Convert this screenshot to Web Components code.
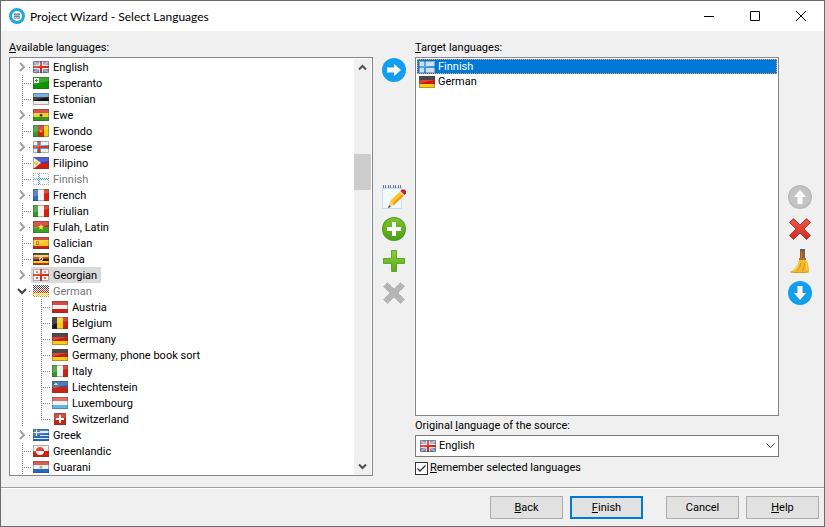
<!DOCTYPE html>
<html lang="en">
<head>
<meta charset="utf-8">
<meta name="viewport" content="width=device-width, initial-scale=1">
<title>Project Wizard - Select Languages</title>
<style>
  body {
    margin: 0;
    font-family: Roboto, "Liberation Sans", sans-serif;
    font-size: 11px;
    color: #000;
  }
</style>
</head>
<body>
<wizard-window>
  <span slot="title">Project Wizard - Select Languages</span>

  <language-tree slot="available">
    <span slot="label"><u>A</u>vailable languages:</span>
    <tree-item flag="gb" expandable>English</tree-item>
    <tree-item flag="eo">Esperanto</tree-item>
    <tree-item flag="ee">Estonian</tree-item>
    <tree-item flag="gh" expandable>Ewe</tree-item>
    <tree-item flag="cm">Ewondo</tree-item>
    <tree-item flag="fo" expandable>Faroese</tree-item>
    <tree-item flag="ph">Filipino</tree-item>
    <tree-item flag="fi" disabled>Finnish</tree-item>
    <tree-item flag="fr" expandable>French</tree-item>
    <tree-item flag="it">Friulian</tree-item>
    <tree-item flag="bf" expandable>Fulah, Latin</tree-item>
    <tree-item flag="es">Galician</tree-item>
    <tree-item flag="ug">Ganda</tree-item>
    <tree-item flag="ge" expandable selected>Georgian</tree-item>
    <tree-item flag="de" expandable expanded disabled>German
      <tree-item slot="children" flag="at">Austria</tree-item>
      <tree-item slot="children" flag="be">Belgium</tree-item>
      <tree-item slot="children" flag="de">Germany</tree-item>
      <tree-item slot="children" flag="de">Germany, phone book sort</tree-item>
      <tree-item slot="children" flag="it">Italy</tree-item>
      <tree-item slot="children" flag="li">Liechtenstein</tree-item>
      <tree-item slot="children" flag="lu">Luxembourg</tree-item>
      <tree-item slot="children" flag="ch" last>Switzerland</tree-item>
    </tree-item>
    <tree-item flag="gr" expandable>Greek</tree-item>
    <tree-item flag="gl">Greenlandic</tree-item>
    <tree-item flag="py">Guarani</tree-item>
  </language-tree>

  <tool-bar slot="tree-tools">
    <tool-button slot="first" icon="right" name="Add to target languages"></tool-button>
    <tool-button icon="edit" name="Edit language"></tool-button>
    <tool-button icon="add-round" name="Add language"></tool-button>
    <tool-button icon="add" name="Add sublanguage"></tool-button>
    <tool-button icon="remove" name="Remove language" disabled></tool-button>
  </tool-bar>

  <target-list slot="target">
    <span slot="label"><u>T</u>arget languages:</span>
    <target-item flag="fi" selected>Finnish</target-item>
    <target-item flag="de">German</target-item>
  </target-list>
  <source-select slot="target" flag="gb" value="English"></source-select>
  <check-option slot="target" checked><u>R</u>emember selected languages</check-option>

  <tool-bar slot="target-tools">
    <tool-button icon="up" name="Move up" disabled></tool-button>
    <tool-button icon="delete" name="Remove"></tool-button>
    <tool-button icon="clear" name="Remove all"></tool-button>
    <tool-button icon="down" name="Move down"></tool-button>
  </tool-bar>

  <dialog-button slot="steps"><u>B</u>ack</dialog-button>
  <dialog-button slot="steps" primary><u>F</u>inish</dialog-button>
  <dialog-button slot="actions">Cancel</dialog-button>
  <dialog-button slot="actions"><u>H</u>elp</dialog-button>
</wizard-window>

<script>
// Flag artwork on a 16x12 grid
const FLAGS = {
  gb: `<path fill="#4f96da" d="M0 0h16v12H0z"/><path stroke="#f0dcdc" stroke-width="1.400" d="M0 0l16 12M16 0L0 12"/><path stroke="#e06458" stroke-width=".7" d="M0 0l16 12M16 0L0 12"/><path fill="#f6dcd8" d="M6 0h4v12H6zM0 4h16v4H0z"/><path fill="#d42a20" d="M7 0h2v12H7zM0 5h16v2H0z"/>`,
  eo: `<path fill="#0a9600" d="M0 0h16v12H0z"/><path fill="#fff" d="M1 1h5v5H1z"/><path fill="#0a9600" d="M3 2h1v1h1v1H4v1H3V4H2V3h1z"/>`,
  ee: `<path fill="#5b9bd8" d="M0 0h16v4H0z"/><path fill="#151515" d="M0 4h16v4H0z"/><path fill="#eee" d="M0 8h16v4H0z"/>`,
  gh: `<path fill="#d02a1c" d="M0 0h16v4H0z"/><path fill="#f6cf1c" d="M0 4h16v4H0z"/><path fill="#389820" d="M0 8h16v4H0z"/><path fill="#222" d="M8 4l.6 1.4H10L9 6.400 9.400 8 8 7 6.600 8 7 6.400 6 5.400h1.400z"/>`,
  cm: `<path fill="#2f9a24" d="M0 0h5v12H0z"/><path fill="#cc2214" d="M5 0h6v12H5z"/><path fill="#f4cc10" d="M11 0h5v12h-5z"/><path fill="#f4b010" d="M8 4l.6 1.400H10L9 6.400 9.400 8 8 7 6.600 8 7 6.400 6 5.400h1.400z"/>`,
  fo: `<path fill="#f2f2f4" d="M0 0h16v12H0z"/><path fill="#4aa0d8" d="M4 0h4v12H4zM0 4h16v4H0z"/><path fill="#d8301c" d="M5 0h2v12H5zM0 5h16v2H0z"/>`,
  ph: `<path fill="#2a3cc8" d="M0 0h16v6H0z"/><path fill="#d01c10" d="M0 6h16v6H0z"/><path fill="#f4f0e0" d="M0 0l8 6-8 6z"/><path fill="#f0c020" d="M2 4h2v1h1v2H4v1H2V7H1V5h1z"/>`,
  fi: `<path fill="#f0f3f6" d="M0 0h16v12H0z"/><path fill="#4a9cd8" d="M5 0h2v12H5zM0 5h16v2H0z"/>`,
  fr: `<path fill="#2c6cc4" d="M0 0h5v12H0z"/><path fill="#f2f2f2" d="M5 0h6v12H5z"/><path fill="#d4200f" d="M11 0h5v12h-5z"/>`,
  it: `<path fill="#2c9a26" d="M0 0h5v12H0z"/><path fill="#f2f2f2" d="M5 0h6v12H5z"/><path fill="#d4200f" d="M11 0h5v12h-5z"/>`,
  bf: `<path fill="#d02a1c" d="M0 0h16v6H0z"/><path fill="#3aa02a" d="M0 6h16v6H0z"/><path fill="#fae020" d="M8 3l.8 2H11L9.400 6.500 10 9 8 7.500 6 9l.6-2.500L5 5h2.200z"/>`,
  es: `<path fill="#c8230f" d="M0 0h16v12H0z"/><path fill="#f8c820" d="M0 3h16v6H0z"/><path fill="#c06a20" d="M3 4h3v4H3z"/><path fill="#f0c890" d="M4 5h1v2H4z"/>`,
  ug: `<path fill="#222" d="M0 0h16v2H0zM0 6h16v2H0z"/><path fill="#f4cf20" d="M0 2h16v2H0zM0 8h16v2H0z"/><path fill="#d02a14" d="M0 4h16v2H0zM0 10h16v2H0z"/><circle cx="8" cy="6" r="2" fill="#ddd"/><path fill="#555" d="M8 5h1v2H7V6h1z"/>`,
  ge: `<path fill="#f4f4f4" d="M0 0h16v12H0z"/><path fill="#d62c1c" d="M7 0h2v12H7zM0 5h16v2H0z"/><path fill="#de6a60" d="M3 2h2v2H3zM11 2h2v2h-2zM3 8h2v2H3zM11 8h2v2h-2z"/>`,
  de: `<path fill="#1c1c1c" d="M0 0h16v4H0z"/><path fill="#d01808" d="M0 4h16v4H0z"/><path fill="#f8cc18" d="M0 8h16v4H0z"/>`,
  at: `<path fill="#cc2214" d="M0 0h16v12H0z"/><path fill="#f0f0f0" d="M0 4h16v4H0z"/>`,
  be: `<path fill="#181818" d="M0 0h5v12H0z"/><path fill="#f8cc18" d="M5 0h6v12H5z"/><path fill="#d42010" d="M11 0h5v12h-5z"/>`,
  li: `<path fill="#1c60b0" d="M0 0h16v6H0z"/><path fill="#d0200f" d="M0 6h16v6H0z"/><path fill="#f0d040" d="M2 3h1V2h2v1h1v1H2z"/>`,
  lu: `<path fill="#dc4a40" d="M0 0h16v4H0z"/><path fill="#f2f2f2" d="M0 4h16v4H0z"/><path fill="#64b4e4" d="M0 8h16v4H0z"/>`,
  ch: `<path fill="#d4200f" d="M2 0h12v12H2z"/><path fill="#fff" d="M7 2h2v3h3v2H9v3H7V7H4V5h3z"/>`,
  gr: `<path fill="#dce8f6" d="M0 0h16v12H0z"/><path fill="#2a68b8" d="M0 0h7v7H0zM7 0h9v2H7zM7 4h9v2H7zM0 7h16v2H0zM0 10h16v2H0z"/><path fill="#dce8f6" d="M3 0h1v7H3zM0 3h7v1H0z"/>`,
  gl: `<path fill="#f2f2f2" d="M0 0h16v6H0z"/><path fill="#d4200f" d="M0 6h16v6H0z"/><path fill="#d4200f" d="M3 6a4 4 0 018 0z"/><path fill="#f2f2f2" d="M3 6a4 4 0 008 0z"/>`,
  py: `<path fill="#d03a28" d="M0 0h16v4H0z"/><path fill="#f0f0f0" d="M0 4h16v4H0z"/><path fill="#2868c0" d="M0 8h16v4H0z"/><circle cx="8" cy="6" r="1.500" fill="#a8b070"/>`
};

// Tool icons on a 24x24 grid
const ARROW = 'M5 9.500h7V6l7 6-7 6v-3.500H5z';
const CROSS = 'M5.500 1.500L12 8l6.500-6.500 4 4L16 12l6.500 6.500-4 4L12 16l-6.500 6.500-4-4L8 12 1.500 5.500z';
const ICONS = {
  right: `<circle cx="12" cy="12" r="12" fill="#139ff0"/><path fill="#fff" d="${ARROW}"/>`,
  down: `<circle cx="12" cy="12" r="12" fill="#139ff0"/><path fill="#fff" transform="rotate(90 12 12)" d="${ARROW}"/>`,
  up: `<circle cx="12" cy="12" r="12" fill="#b9b9b9"/><circle cx="12" cy="12" r="10.500" fill="#c4c4c4"/><path fill="#fff" transform="rotate(-90 12 12)" d="${ARROW}"/>`,
  edit: `<path fill="#bfe0f2" d="M0 2h20v22H0z"/><path fill="#f2faff" d="M1 4h18v19H1z"/><path stroke="#737b88" d="M1.500 0v3M3.500 0v3M6.500 0v3M8.500 0v3M11.500 0v3M13.500 0v3M16.500 0v3M18.500 0v3"/>
    <path fill="#f3cf9a" d="M8 16l4 4-6 3z"/><path fill="#555" d="M7 20l2 2-3 1z"/><path fill="#ffc62a" d="M8 16L18.500 6l4 4L12 20z"/><path fill="#f59a1c" d="M10.500 18.500L21 8.500l1.500 1.500L12 20z"/><path fill="#ddd" d="M17.500 7l1-1 4 4-1 1z"/><path fill="#c81f20" d="M18.500 6l1.500-1.400h2.500L24 6v2.500L22.500 10z"/>`,
  'add-round': `<defs><linearGradient id="g" x2="0" y2="1"><stop stop-color="#7cc62a"/><stop offset="1" stop-color="#4a9f16"/></linearGradient></defs><circle cx="12" cy="12" r="12" fill="#4d9c1c"/><circle cx="12" cy="12" r="11" fill="url(#g)"/><path fill="#fff" d="M10 5h4v5h5v4h-5v5h-4v-5H5v-4h5z"/>`,
  add: `<defs><linearGradient id="g" x2="0" y2="1"><stop stop-color="#8ed03a"/><stop offset="1" stop-color="#5aaa1e"/></linearGradient></defs><path fill="url(#g)" stroke="#5ea62a" d="M9.500 1.500h5v8h8v5h-8v8h-5v-8h-8v-5h8z"/>`,
  remove: `<path fill="#b6b6b6" stroke="#a4a4a4" stroke-dasharray="1 1" d="${CROSS}"/>`,
  delete: `<defs><linearGradient id="g" x2="0" y2="1"><stop stop-color="#e85a4c"/><stop offset="1" stop-color="#cf2a24"/></linearGradient></defs><path fill="url(#g)" stroke="#c4332c" d="${CROSS}"/>`,
  clear: `<path fill="#9a5a2c" d="M12 1h5v9h-5z"/><path fill="#c07c44" d="M13 2h1v8h-1z"/><path fill="#3f6485" d="M12 0h5v2h-5z"/><path fill="#a8743c" d="M11 9h7v2h-7z"/><path fill="#f5b82a" d="M11 11h7c2.500 3 3 8 3 12-6 1.500-13 1.500-19 0 4-2 8-6 9-12z"/><path fill="none" stroke="#d8961a" d="M2.500 23c8 1 13 1 18 0M8.500 22c2-2 4-5 4-8M14.500 22c1-2 2-5 2-8"/><path fill="none" stroke="#ffdc60" d="M5.500 21.500c4-2 5-5 6-8M19 21c0-3-.5-5-1-7"/>`
};

class FlagIcon extends HTMLElement {
  constructor() {
    super();
    const shadow = this.attachShadow({ mode: 'open' });
    const code = this.getAttribute('code');
    const faded = this.hasAttribute('faded');
    const edge = code === 'ch' ? 'M2.500.5h11v11h-11z' : 'M.5.5h15v11H.5z';
    const gloss = code === 'ch' ? 'M2 0h12v5Q8 5 2 8z' : 'M0 0h16v4Q8 5 0 8z';
    shadow.innerHTML = `
      <style>
        :host { display: block; width: 16px; height: 12px; flex: none; }
        svg { display: block; }
      </style>
      <svg width="16" height="12" viewBox="0 0 16 12" aria-hidden="true">
        <defs>
          <pattern id="mesh" width="2" height="2" patternUnits="userSpaceOnUse">
            <path fill="#fff" d="M1 0h1v1H1zM0 1h1v1H0z"/>
          </pattern>
        </defs>
        ${FLAGS[code]}
        <path fill="#fff" fill-opacity=".2" d="${gloss}"/>
        <path fill="none" stroke="#444" stroke-opacity=".4" d="${edge}"/>
        ${faded ? '<path fill="url(#mesh)" shape-rendering="crispEdges" d="M0 0h16v12H0z"/>' : ''}
      </svg>
    `;
  }
}

class TreeItem extends HTMLElement {
  constructor() {
    super();
    const shadow = this.attachShadow({ mode: 'open' });
    const expandable = this.hasAttribute('expandable');
    const disabled = this.hasAttribute('disabled');
    shadow.innerHTML = `
      <style>
        :host {
          --dots-y: repeating-linear-gradient(#808080 0 1px, transparent 1px 2px);
          --dots-x: repeating-linear-gradient(90deg, #808080 0 1px, transparent 1px 2px);
          display: block;
          color: #000;
        }
        :host([disabled]) .text { color: #777; }
        .row { display: flex; align-items: center; height: 16px; }
        .stem {
          flex: none;
          width: 18px;
          height: 16px;
          background: var(--dots-y) 9px 0 / 1px 100% no-repeat, var(--dots-x) 9px 8px / 9px 1px no-repeat;
        }
        :host([last]) .stem { background-size: 1px 8px, 9px 1px; }
        .toggle {
          display: flex;
          align-items: center;
          justify-content: center;
          padding: 0 1px 0 0;
          border: 0;
          background: var(--dots-x) 16px 8px / 2px 1px no-repeat;
        }
        .toggle svg { fill: none; stroke: #a0a0a0; stroke-width: 2; }
        :host([expanded]) .toggle svg { stroke: #404040; transform: rotate(90deg); }
        .label { display: flex; align-items: center; height: 16px; padding: 0 4px 0 2px; gap: 4px; white-space: nowrap; }
        :host([selected]) .label { background: #d9d9d9; }
        .children {
          display: none;
          padding-left: 19px;
          background: var(--dots-y) 9px 0 / 1px 100% no-repeat;
        }
        :host([expanded]) .children { display: block; }
      </style>
      <div class="row">
        ${expandable
          ? `<button class="stem toggle" aria-label="Expand"><svg width="10" height="10" viewBox="0 0 10 10"><path d="M3 1l4 4-4 4"/></svg></button>`
          : '<span class="stem"></span>'}
        <span class="label">
          <flag-icon code="${this.getAttribute('flag')}" ${disabled ? 'faded' : ''}></flag-icon>
          <span class="text"><slot></slot></span>
        </span>
      </div>
      <div class="children" role="group"><slot name="children"></slot></div>
    `;
    this.setAttribute('role', 'treeitem');
    if (expandable) {
      shadow.querySelector('.toggle').addEventListener('click', () => this.toggleAttribute('expanded'));
    }
  }
}

class LanguageTree extends HTMLElement {
  constructor() {
    super();
    const shadow = this.attachShadow({ mode: 'open' });
    shadow.innerHTML = `
      <style>
        :host { display: flex; flex-direction: column; flex: 1; }
        .heading { line-height: 18px; }
        .box { display: flex; flex: 1; padding: 1px 1px 0; border: 1px solid #828790; background: #fff; }
        .tree { flex: 1; padding-left: 2px; }
        .scroll { display: flex; flex-direction: column; width: 17px; background: #f0f0f0; }
        .scroll button { display: flex; align-items: center; justify-content: center; height: 17px; padding: 0; border: 0; background: none; }
        .scroll svg { fill: none; stroke: #505050; stroke-width: 2; }
        .track { display: grid; flex: 1; grid-template-rows: 78fr 36fr 268fr; }
        .thumb { grid-row: 2; background: #cdcdcd; }
      </style>
      <div class="heading" id="heading"><slot name="label"></slot></div>
      <div class="box">
        <div class="tree" role="tree" aria-labelledby="heading"><slot></slot></div>
        <div class="scroll">
          <button aria-label="Scroll up"><svg width="9" height="7" viewBox="0 0 9 7"><path d="M1 5.500L4.500 2 8 5.500"/></svg></button>
          <div class="track"><div class="thumb"></div></div>
          <button aria-label="Scroll down"><svg width="9" height="7" viewBox="0 0 9 7"><path d="M1 1.500L4.500 5 8 1.500"/></svg></button>
        </div>
      </div>
    `;
  }
}

class TargetItem extends HTMLElement {
  constructor() {
    super();
    const shadow = this.attachShadow({ mode: 'open' });
    shadow.innerHTML = `
      <style>
        :host {
          display: flex;
          align-items: center;
          gap: 3px;
          box-sizing: border-box;
          height: 15px;
          padding: 0 1px;
          border: 1px dotted transparent;
          white-space: nowrap;
          cursor: default;
        }
        :host([selected]) { color: #fff; background: #0078d7; border-color: #f0a050; }
        :host([selected]) flag-icon { opacity: .85; }
      </style>
      <flag-icon code="${this.getAttribute('flag')}"></flag-icon>
      <span><slot></slot></span>
    `;
    this.setAttribute('role', 'option');
    this.addEventListener('click', () => {
      for (const item of this.parentElement.querySelectorAll('target-item')) {
        item.toggleAttribute('selected', item === this);
      }
    });
  }
}

class TargetList extends HTMLElement {
  constructor() {
    super();
    const shadow = this.attachShadow({ mode: 'open' });
    shadow.innerHTML = `
      <style>
        :host { display: flex; flex-direction: column; flex: 1; }
        .heading { line-height: 18px; }
        .box { flex: 1; padding: 1px; border: 1px solid #828790; background: #fff; outline: none; }
      </style>
      <div class="heading" id="heading"><slot name="label"></slot></div>
      <div class="box" role="listbox" aria-labelledby="heading" tabindex="0"><slot></slot></div>
    `;
  }
}

class SourceSelect extends HTMLElement {
  constructor() {
    super();
    const shadow = this.attachShadow({ mode: 'open' });
    shadow.innerHTML = `
      <style>
        :host { display: block; }
        label { display: block; padding-top: 1px; line-height: 18px; }
        .field { display: grid; align-items: center; }
        .field > * { grid-area: 1 / 1; }
        select {
          appearance: none;
          width: 100%;
          height: 22px;
          margin: 0;
          padding: 0 20px 2px 23px;
          border: 1px solid #7a7a7a;
          border-radius: 0;
          background: #fff;
          color: inherit;
          font: inherit;
        }
        flag-icon { z-index: 1; margin-left: 5px; pointer-events: none; }
        svg { z-index: 1; justify-self: end; margin-right: 4px; fill: none; stroke: #444; pointer-events: none; }
      </style>
      <label for="source">Original <u>l</u>anguage of the source:</label>
      <div class="field">
        <select id="source"><option>${this.getAttribute('value')}</option></select>
        <flag-icon code="${this.getAttribute('flag')}"></flag-icon>
        <svg width="9" height="6" viewBox="0 0 9 6"><path d="M.5.5l4 4 4-4"/></svg>
      </div>
    `;
  }
}

class CheckOption extends HTMLElement {
  constructor() {
    super();
    const shadow = this.attachShadow({ mode: 'open' });
    shadow.innerHTML = `
      <style>
        :host { display: block; margin-top: 3px; }
        label { display: flex; align-items: center; gap: 2px; line-height: 16px; }
        input {
          appearance: none;
          box-sizing: border-box;
          width: 13px;
          height: 13px;
          margin: 0;
          border: 1px solid #333;
          background: #fff;
        }
        input:checked {
          background: #fff url('data:image/svg+xml,<svg xmlns="http://www.w3.org/2000/svg" viewBox="0 0 11 11"><path fill="none" stroke="%23333" stroke-width="1.400" d="M1.500 5.500L4 8l5.500-5.500"/></svg>');
        }
      </style>
      <label><input type="checkbox" ${this.hasAttribute('checked') ? 'checked' : ''}><span><slot></slot></span></label>
    `;
  }
}

class ToolBar extends HTMLElement {
  constructor() {
    super();
    const shadow = this.attachShadow({ mode: 'open' });
    shadow.innerHTML = `
      <style>
        :host { display: flex; flex-direction: column; width: 24px; padding-top: 19px; }
        .first { height: 127px; }
        .rest { display: flex; flex-direction: column; gap: 8px; }
      </style>
      <div class="first"><slot name="first"></slot></div>
      <div class="rest"><slot></slot></div>
    `;
  }
}

class ToolButton extends HTMLElement {
  constructor() {
    super();
    const shadow = this.attachShadow({ mode: 'open' });
    shadow.innerHTML = `
      <style>
        :host { display: block; }
        button { display: block; padding: 0; border: 0; background: none; }
        svg { display: block; }
      </style>
      <button aria-label="${this.getAttribute('name')}" ${this.hasAttribute('disabled') ? 'disabled' : ''}>
        <svg width="24" height="24" viewBox="0 0 24 24">${ICONS[this.getAttribute('icon')]}</svg>
      </button>
    `;
  }
}

class DialogButton extends HTMLElement {
  constructor() {
    super();
    const shadow = this.attachShadow({ mode: 'open' });
    shadow.innerHTML = `
      <style>
        :host { display: block; }
        button {
          box-sizing: border-box;
          width: 73px;
          height: 23px;
          padding: 0;
          border: 1px solid #adadad;
          background: #e1e1e1;
          color: inherit;
          font: inherit;
        }
        :host([primary]) button { border: 2px solid #0078d7; }
      </style>
      <button type="button"><slot></slot></button>
    `;
  }
}

class WizardWindow extends HTMLElement {
  constructor() {
    super();
    const shadow = this.attachShadow({ mode: 'open' });
    shadow.innerHTML = `
      <style>
        :host {
          display: flex;
          flex-direction: column;
          box-sizing: border-box;
          min-height: 100vh;
          border: 1px solid #6b6b6b;
          background: #f0f0f0;
          cursor: default;
        }
        header { display: flex; align-items: center; height: 30px; padding-left: 8px; background: #fff; }
        .logo { display: block; margin-right: 5px; }
        h1 { flex: 1; margin: 0; font: 12px Lato, "Open Sans", sans-serif; }
        header button { display: flex; align-items: center; justify-content: center; width: 46px; height: 30px; padding: 0; border: 0; background: none; }
        header button svg { fill: none; stroke: #000; }
        main { display: flex; flex: 1; gap: 9px; padding: 8px 12px 11px 8px; }
        .target { display: flex; flex: 1; flex-direction: column; }
        slot[name="available"] { display: flex; flex: 1; }
        footer {
          display: flex;
          justify-content: flex-end;
          gap: 23px;
          padding: 8px 5px 7px;
          border-top: 1px solid #a0a0a0;
          box-shadow: inset 0 1px #fff;
        }
        footer div { display: flex; gap: 7px; }
      </style>
      <header>
        <svg class="logo" width="16" height="16" viewBox="0 0 16 16" aria-hidden="true">
          <circle cx="8" cy="8" r="6.500" fill="#fff" stroke="#1fa9e1" stroke-width="3"/>
          <path fill="#a9b8cc" d="M5 5h6v6H5z"/><path stroke="#6f8bb0" d="M5 6.500h6M5 8.500h6"/>
        </svg>
        <h1><slot name="title"></slot></h1>
        <button aria-label="Minimize"><svg width="10" height="10"><path d="M0 5.500h10"/></svg></button>
        <button aria-label="Maximize"><svg width="10" height="10"><path d="M.5.5h9v9h-9z"/></svg></button>
        <button aria-label="Close"><svg width="10" height="10"><path d="M0 0l10 10M10 0L0 10"/></svg></button>
      </header>
      <main>
        <slot name="available"></slot>
        <slot name="tree-tools"></slot>
        <div class="target"><slot name="target"></slot></div>
        <slot name="target-tools"></slot>
      </main>
      <footer>
        <div><slot name="steps"></slot></div>
        <div><slot name="actions"></slot></div>
      </footer>
    `;
  }
}

customElements.define('flag-icon', FlagIcon);
customElements.define('tree-item', TreeItem);
customElements.define('language-tree', LanguageTree);
customElements.define('target-item', TargetItem);
customElements.define('target-list', TargetList);
customElements.define('source-select', SourceSelect);
customElements.define('check-option', CheckOption);
customElements.define('tool-bar', ToolBar);
customElements.define('tool-button', ToolButton);
customElements.define('dialog-button', DialogButton);
customElements.define('wizard-window', WizardWindow);
</script>
</body>
</html>
